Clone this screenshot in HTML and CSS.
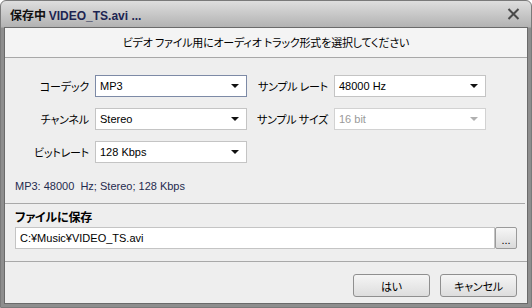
FILE: index.html
```html
<!DOCTYPE html>
<html lang="ja">
<head>
  <meta charset="UTF-8">
  <title>保存中 VIDEO_TS.avi ...</title>
  <link rel="stylesheet" href="styles.css">
</head>
<body>

  <div class="window">
    <div class="titlebar">
      <span class="title">保存中 <span class="file">VIDEO_TS.avi ...</span></span>
      <svg class="close" width="13" height="12" viewBox="0 0 13 12">
        <path d="M1.5 1 L11.5 11 M11.5 1 L1.5 11" stroke="#4a4a4a" stroke-width="2" fill="none"/>
      </svg>
    </div>

    <div class="client">
      <div class="banner">ビデオ ファイル用にオーディオ トラック形式を選択してください</div>

      <div class="format">
        <div class="grid">
          <label>コーデック</label>
          <div class="select focused"><span>MP3</span><i class="arrow"></i></div>
          <label>サンプル レート</label>
          <div class="select"><span>48000 Hz</span><i class="arrow"></i></div>

          <label>チャンネル</label>
          <div class="select"><span>Stereo</span><i class="arrow"></i></div>
          <label>サンプル サイズ</label>
          <div class="select disabled"><span>16 bit</span><i class="arrow"></i></div>

          <label>ビットレート</label>
          <div class="select"><span>128 Kbps</span><i class="arrow"></i></div>
        </div>
        <p class="summary">MP3: 48000&nbsp; Hz; Stereo; 128 Kbps</p>
      </div>

      <div class="save">
        <div class="save-label">ファイルに保存</div>
        <div class="path-row">
          <div class="path">C:¥Music¥VIDEO_TS.avi</div>
          <button class="browse">...</button>
        </div>
      </div>

      <div class="footer">
        <button class="btn">はい</button>
        <button class="btn">キャンセル</button>
      </div>
    </div>
  </div>

</body>
</html>
```

FILE: styles.css
```css
body {
  margin: 0;
  background-color: #fff;
  font-family: "Liberation Sans", "Noto Sans CJK JP", sans-serif;
  font-size: 12px;
  color: #000;
}

.window {
  width: 532px;
  height: 308px;
  box-sizing: border-box;
  display: flex;
  flex-direction: column;
  border: 1px solid #7a7a7a;
  border-radius: 6px 6px 0 0;
  background: linear-gradient(#dedede 0px, #b2b2b2 26px, #8e8e8e 27px, #8e8e8e 100%);
  overflow: hidden;
}

.titlebar {
  height: 26px;
  display: flex;
  align-items: center;
  justify-content: space-between;
  padding: 0 11px 0 9px;
}

.title {
  font-family: "Noto Sans CJK JP", sans-serif;
  font-weight: bold;
  font-size: 12px;
  color: #111;
  font-feature-settings: "palt";
}

.title .file {
  font-family: "Liberation Sans", sans-serif;
  color: #1c2452;
}

.client {
  flex: 1;
  margin: 0 3px 3px 3px;
  border: 1px solid #6a6a6a;
  background-color: #eeeeee;
  display: flex;
  flex-direction: column;
}

.jp,
.banner,
.grid label,
.save-label,
.btn {
  font-family: "Noto Sans CJK JP", sans-serif;
  font-size: 11px;
  letter-spacing: -0.2px;
  font-feature-settings: "palt";
}

.banner {
  height: 29px;
  line-height: 29px;
  text-align: center;
  background-color: #f4f4f4;
  border-bottom: 1px solid #a8a8a8;
}

.format {
  padding: 17px 0 0 10px;
  height: 128px;
  border-bottom: 1px solid #a8a8a8;
  margin-right: 2px;
}

.grid {
  display: grid;
  grid-template-columns: 74px 152px 75px 152px;
  grid-auto-rows: 22px;
  column-gap: 6px;
  row-gap: 11px;
}

.grid label {
  text-align: right;
  line-height: 22px;
  white-space: nowrap;
}

.select {
  display: flex;
  align-items: center;
  justify-content: space-between;
  box-sizing: border-box;
  background-color: #fff;
  border: 1px solid #c4c4c4;
  padding: 0 7px 0 4px;
  font-size: 11px;
}

.select.focused {
  border-color: #7d8aa6;
}

.arrow {
  width: 0;
  height: 0;
  border-left: 4px solid transparent;
  border-right: 4px solid transparent;
  border-top: 4px solid #111;
}

.select.disabled {
  color: #9a9a9a;
  border-color: #d2d2d2;
}

.select.disabled .arrow {
  border-top-color: #b0b0b0;
}

.summary {
  margin: 16px 0 0 0;
  line-height: 14px;
  font-size: 11px;
  color: #1f2b4e;
}

.save {
  height: 52px;
  padding: 5px 10px 0 10px;
  border-bottom: 1px solid #a8a8a8;
}

.save-label {
  height: 16px;
  line-height: 16px;
  font-weight: bold;
  font-size: 12px;
}

.path-row {
  display: flex;
  margin-top: 2px;
  height: 22px;
}

.path {
  flex: 1;
  box-sizing: border-box;
  background-color: #fff;
  border: 1px solid #c4c4c4;
  line-height: 20px;
  padding: 0 4px;
  font-size: 11px;
}

.browse {
  width: 22px;
  height: 22px;
  padding: 4px 0 0 0;
  border: 1px solid #9a9a9a;
  border-radius: 2px;
  background: linear-gradient(#f6f6f6, #dadada);
  font-family: "Liberation Sans", sans-serif;
  font-size: 11px;
  line-height: 14px;
}

.footer {
  flex: 1;
  display: flex;
  justify-content: flex-end;
  align-items: flex-start;
  gap: 10px;
  padding: 12px 10px 0 0;
}

.btn {
  width: 77px;
  height: 23px;
  border: 1px solid #8f8f8f;
  border-radius: 3px;
  background: linear-gradient(#f5f5f5, #dddddd);
  padding: 0;
  color: #000;
}
```
